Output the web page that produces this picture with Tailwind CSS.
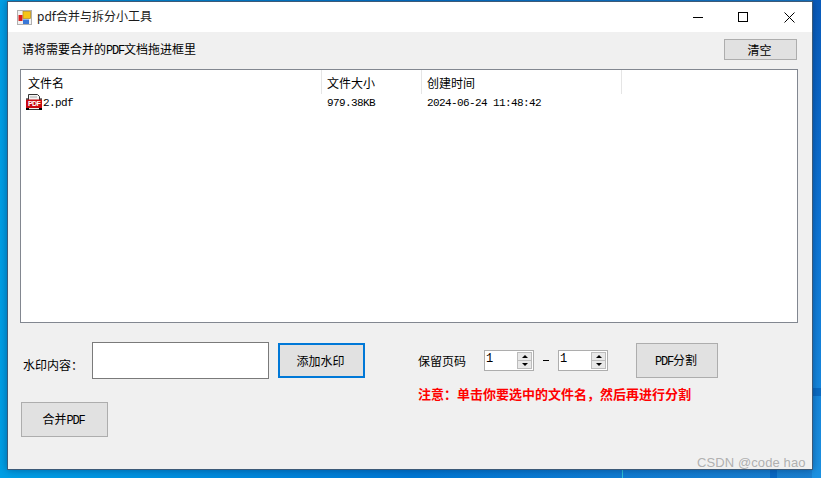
<!DOCTYPE html>
<html lang="zh">
  <head>
    <meta charset="UTF-8" />
    <title>pdf合并与拆分小工具</title>
    <script src="https://cdn.jsdelivr.net/npm/@tailwindcss/browser@4"></script>
  </head>
  <body class="relative w-[821px] h-[478px] overflow-hidden bg-gradient-to-r from-[#00a0e6] via-[#0078d4] to-[#1a80d0] font-['Noto_Sans_CJK_SC',sans-serif] text-[12px] text-black">
    <!-- desktop wallpaper bits around the window -->
    <div class="absolute right-0 top-0 w-[9px] h-[478px] bg-gradient-to-b from-[#0a5cbc] via-[#0f78d8] to-[#1c92e2]"></div>
    <div class="absolute right-0 top-[388px] w-[9px] h-[8px] bg-[#0b6cc4]"></div>
    <div class="absolute left-[622px] top-[470px] w-px h-[8px] bg-[#30c8d8]"></div>
    <div class="absolute left-[770px] top-[470px] w-[7px] h-[8px] bg-[#0868c4]"></div>

    <!-- window -->
    <div class="absolute left-[7px] top-[1px] w-[806px] h-[469px] flex flex-col border border-[#3c5a78] bg-[#f0f0f0] shadow-[0_0_8px_rgba(0,40,90,0.5)]">
      <!-- title bar -->
      <div class="h-[30px] shrink-0 flex items-center bg-white pl-[9px]">
        <svg class="w-[15px] h-[15px] shrink-0" viewBox="0 0 15 15">
          <rect x="0.5" y="0.5" width="14" height="14" fill="#f2f2f2" stroke="#b0b0b0"/>
          <rect x="6" y="1.5" width="7.5" height="7" fill="#f5c518" stroke="#b98a10" stroke-width="0.7"/>
          <rect x="1.5" y="5" width="4" height="6" fill="#d81e1e"/>
          <rect x="6" y="9.5" width="6" height="4.5" fill="#3a78d8"/>
        </svg>
        <span class="ml-[5px] font-['Noto_Sans','Noto_Sans_CJK_SC',sans-serif] text-[12px] text-[#1a1a1a]">pdf合并与拆分小工具</span>
        <div class="ml-auto flex h-full items-center">
          <div class="w-[45px] flex justify-center"><div class="w-[10px] h-px bg-black"></div></div>
          <div class="w-[46px] flex justify-center"><div class="w-[10px] h-[10px] border border-black"></div></div>
          <div class="w-[46px] flex justify-center">
            <svg class="w-[11px] h-[11px]" viewBox="0 0 11 11" fill="none" stroke="#000" stroke-width="1"><path d="M0.5 0.5 10.5 10.5M10.5 0.5 0.5 10.5"/></svg>
          </div>
        </div>
      </div>

      <!-- client area -->
      <div class="flex-1 flex flex-col pl-[12px] pr-[14px]">
        <div class="h-[37px] shrink-0 flex items-center justify-between pl-[2px] pb-[2px]">
          <span>请将需要合并的<span class="font-['Liberation_Mono'] text-[12px] tracking-[-1.2px]">PDF</span>文档拖进框里</span>
          <button class="w-[73px] h-[21px] mr-px pr-[2px] border border-[#adadad] bg-[#e1e1e1]">清空</button>
        </div>

        <!-- file list -->
        <div class="w-[778px] h-[254px] shrink-0 border border-[#828790] bg-white">
          <div class="flex h-[24px] items-center">
            <div class="w-[301px] h-full pl-[7px] pt-px border-r border-[#e5e5e5] flex items-center">文件名</div>
            <div class="w-[100px] h-full pl-[5px] pt-px border-r border-[#e5e5e5] flex items-center">文件大小</div>
            <div class="w-[200px] h-full pl-[5px] pt-px border-r border-[#e5e5e5] flex items-center">创建时间</div>
          </div>
          <div class="flex h-[16px] items-center font-['Liberation_Mono'] text-[11px] tracking-[-0.6px]">
            <div class="w-[301px] pl-[5px] flex items-center">
              <svg class="w-[16px] h-[16px] shrink-0" viewBox="0 0 16 16">
                <path d="M2.5 0.5H11.5L13.5 2.5V15.5H2.5Z" fill="#f4f4f4" stroke="#333"/>
                <rect x="4" y="2.5" width="7" height="1" fill="#aaa"/>
                <rect x="0" y="5.5" width="16" height="8.5" fill="#c8090f"/>
                <rect x="0" y="4.5" width="2" height="1" fill="#000"/>
                <rect x="14" y="4.5" width="2" height="1" fill="#000"/>
                <rect x="0" y="14" width="3" height="2" fill="#000"/>
                <rect x="13" y="14" width="3" height="2" fill="#000"/>
                <text x="8" y="12.4" text-anchor="middle" font-family="Liberation Sans" font-weight="700" font-size="7" fill="#fff">PDF</text>
              </svg>
              <span class="ml-px pt-[2px]">2.pdf</span>
            </div>
            <div class="w-[100px] pl-[5px] pt-[2px]">979.38KB</div>
            <div class="pl-[5px] pt-[2px]">2024-06-24 11:48:42</div>
          </div>
        </div>

        <!-- bottom controls -->
        <div class="flex mt-[19px]">
          <div class="w-[397px] shrink-0">
            <div class="flex items-start">
              <span class="w-[72px] pl-[3px] pt-[14px] leading-[18px]">水印内容：</span>
              <div class="w-[177px] h-[37px] border border-[#7a7a7a] bg-white"></div>
              <button class="ml-[9px] mt-px w-[87px] h-[35px] pr-[2px] border-2 border-[#0078d7] bg-[#e1e1e1]">添加水印</button>
            </div>
            <button class="ml-px mt-[23px] w-[87px] h-[35px] pr-[2px] border border-[#adadad] bg-[#e1e1e1]">合并<span class="font-['Liberation_Mono'] text-[12px] tracking-[-1.2px]">PDF</span></button>
          </div>
          <div class="flex-1">
            <div class="flex items-start pt-px">
              <span class="w-[67px] pl-px h-[35px] flex items-center">保留页码</span>
              <div class="mt-[7px] w-[50px] h-[21px] flex items-stretch border border-[#adadad] bg-white p-px">
                <span class="flex-1 font-['Liberation_Mono'] text-[12px] leading-[14px]">1</span>
                <div class="w-[15px] flex flex-col bg-[#e8e8e8]">
                  <div class="flex-1 flex items-center justify-center border border-[#bcbcbc]"><div class="border-x-[3px] border-x-transparent border-b-[3px] border-b-black"></div></div>
                  <div class="flex-1 flex items-center justify-center border border-t-0 border-[#bcbcbc]"><div class="border-x-[3px] border-x-transparent border-t-[3px] border-t-black"></div></div>
                </div>
              </div>
              <div class="w-[24px] h-[35px] flex items-center justify-center"><div class="w-[6px] h-px bg-black"></div></div>
              <div class="mt-[7px] w-[50px] h-[21px] flex items-stretch border border-[#adadad] bg-white p-px">
                <span class="flex-1 font-['Liberation_Mono'] text-[12px] leading-[14px]">1</span>
                <div class="w-[15px] flex flex-col bg-[#e8e8e8]">
                  <div class="flex-1 flex items-center justify-center border border-[#bcbcbc]"><div class="border-x-[3px] border-x-transparent border-b-[3px] border-b-black"></div></div>
                  <div class="flex-1 flex items-center justify-center border border-t-0 border-[#bcbcbc]"><div class="border-x-[3px] border-x-transparent border-t-[3px] border-t-black"></div></div>
                </div>
              </div>
              <button class="ml-[28px] w-[82px] h-[35px] pr-[2px] border border-[#adadad] bg-[#e1e1e1]"><span class="font-['Liberation_Mono'] text-[12px] tracking-[-1.2px]">PDF</span>分割</button>
            </div>
            <p class="pl-px mt-[7px] text-[13px] font-bold text-[#ff0000] leading-[18px]">注意：单击你要选中的文件名，然后再进行分割</p>
          </div>
        </div>
      </div>
    </div>
    <span class="absolute left-[697px] top-[454px] font-['Liberation_Sans',sans-serif] text-[13px] tracking-[0.1px] leading-[18px] text-[#a8a8a8]/90">CSDN @code hao</span>
  </body>
</html>
